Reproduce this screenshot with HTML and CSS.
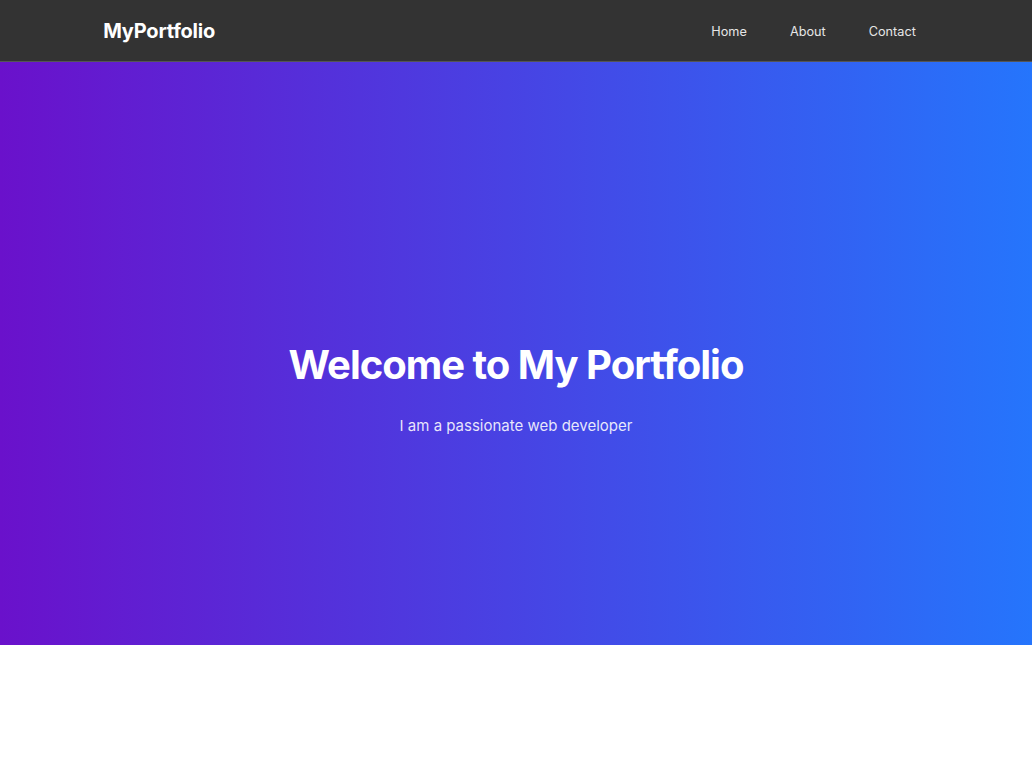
FILE: index.html
```html
<!DOCTYPE html>
<html lang="en">
<head>
<meta charset="UTF-8">
<title>MyPortfolio</title>
<link rel="stylesheet" href="styles.css">
</head>
<body>
<header class="site-header">
  <div class="container header-inner">
    <div class="logo">MyPortfolio</div>
    <nav class="nav">
      <a href="#" class="nav-link">Home</a>
      <a href="#" class="nav-link">About</a>
      <a href="#" class="nav-link">Contact</a>
    </nav>
  </div>
</header>
<section class="hero">
  <h1 class="hero-title">Welcome to My Portfolio</h1>
  <p class="hero-sub">I am a passionate web developer</p>
</section>
</body>
</html>
```

FILE: styles.css
```css
* { box-sizing: border-box; }
html, body { margin: 0; padding: 0; background: #fff; }
body { font-family: Inter, "Noto Sans", sans-serif; }
.site-header {
  background: #333333;
  height: 62px;
  border-bottom: 1px solid #555;
}
.container { width: 80%; margin: 0 auto; }
.header-inner {
  height: 100%;
  display: flex;
  align-items: center;
  justify-content: space-between;
}
.logo {
  color: #fff;
  font-weight: 700;
  font-size: 20px;
  letter-spacing: -0.2px;
}
.nav { display: flex; gap: 23px; padding-right: 3px; padding-top: 2px; }
.nav-link {
  color: #e6e6e6;
  text-decoration: none;
  font-size: 12.7px;
  padding: 0 10px;
}
.hero {
  height: 583px;
  background: linear-gradient(to right, #6a11cb, #2575fc);
  color: #fff;
  text-align: center;
  padding-top: 279px;
}
.hero-title {
  margin: 0 0 25px;
  font-size: 40px;
  line-height: 48px;
  font-weight: 700;
  letter-spacing: -1px;
}
.hero-sub {
  margin: 0;
  font-size: 15px;
  line-height: 24px;
  color: rgba(255,255,255,0.88);
}
```
